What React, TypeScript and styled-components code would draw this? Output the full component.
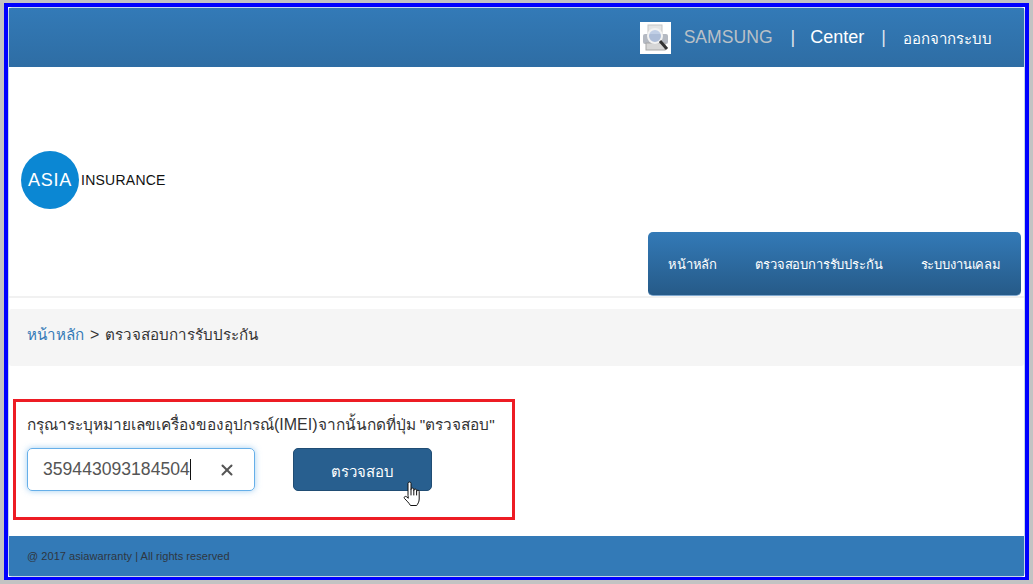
import styled, { createGlobalStyle } from 'styled-components'
import { X } from 'lucide-react'

const GlobalStyle = createGlobalStyle`
  html, body {
    margin: 0;
    padding: 0;
    background: #c3c3c3;
  }
  body {
    font-family: "Liberation Sans", "Noto Sans", sans-serif;
  }
`

const Screen = styled.div`
  width: 1033px;
  height: 584px;
  padding: 3px 4px 4px 4px;
  box-sizing: border-box;
  overflow: hidden;
`

const Frame = styled.div`
  height: 100%;
  box-sizing: border-box;
  border: 4px solid #0000ff;
  border-bottom-width: 3px;
  background: #fff;
`

const Panel = styled.div`
  height: 100%;
  box-sizing: border-box;
  border: 1px solid #c4d6e8;
  border-radius: 4px;
  display: flex;
  flex-direction: column;
`

const TopBar = styled.header`
  height: 59px;
  flex: none;
  display: flex;
  align-items: center;
  justify-content: flex-end;
  padding-right: 32px;
  background: linear-gradient(#337ab7, #2e6da4);
  color: #fff;
  font-size: 18px;
`

const Thumb = styled.div`
  width: 31px;
  height: 32px;
  margin-right: 13px;
  background: #fff;
`

const Brand = styled.span`
  color: #b9c0c7;
  font-size: 17.6px;
  margin-right: 1px;
`

const Sep = styled.span<{ $right: number }>`
  margin: 0 ${p => p.$right}px 0 17px;
  color: #dfe6ee;
`

const Logout = styled.span`
  font-size: 15px;
  position: relative;
  top: 1px;
`

const Masthead = styled.div`
  height: 231px;
  flex: none;
  box-sizing: border-box;
  border-bottom: 2px solid #f1f1f1;
  padding: 84px 3px 0 12px;
  display: flex;
  flex-direction: column;
`

const Logo = styled.div`
  display: flex;
  align-items: center;
  height: 58px;
`

const LogoCircle = styled.div`
  width: 58px;
  height: 58px;
  border-radius: 50%;
  background: #0b87d3;
  color: #fff;
  font-size: 18px;
  letter-spacing: 0.8px;
  display: flex;
  align-items: center;
  justify-content: center;
`

const LogoWord = styled.span`
  margin-left: 2px;
  color: #111;
  font-size: 14px;
  letter-spacing: 0.25px;
`

const Nav = styled.nav`
  align-self: flex-end;
  margin-top: 23px;
  width: 373px;
  height: 64px;
  box-sizing: border-box;
  display: flex;
  align-items: center;
  justify-content: space-between;
  padding: 2px 20px 0;
  border-radius: 5px;
  border-bottom: 1px solid #7fa8cf;
  background: linear-gradient(#337ab7, #265a88);
  color: #fff;
  font-size: 13px;
  letter-spacing: -0.15px;
`

const Crumbs = styled.div`
  height: 57px;
  flex: none;
  margin-top: 11px;
  padding: 0 0 6px 18px;
  box-sizing: border-box;
  display: flex;
  align-items: center;
  gap: 6px;
  background: #f5f5f5;
  border-radius: 3px;
  color: #333;
  font-size: 15.2px;
`

const CrumbLink = styled.a`
  color: #337ab7;
`

const CrumbArrow = styled.span`
  font-size: 16px;
`

const Body = styled.main`
  flex: 1;
  padding: 33px 0 0 4px;
`

const CheckBox = styled.section`
  width: 502px;
  height: 121px;
  box-sizing: border-box;
  border: 3px solid #ed1c24;
  padding: 12px 11px 0;
  color: #333;
`

const Prompt = styled.div`
  font-size: 15.4px;
  line-height: 22px;
  white-space: nowrap;
`

const PromptLatin = styled.span`
  font-size: 16px;
`

const FormRow = styled.div`
  margin-top: 12px;
  display: flex;
  gap: 38px;
`

const Field = styled.div`
  width: 228px;
  height: 43px;
  box-sizing: border-box;
  border: 1px solid #66afe9;
  border-radius: 5px;
  box-shadow: 0 0 6px rgba(102, 175, 233, 0.6);
  padding: 0 18px 0 15px;
  display: flex;
  align-items: center;
  justify-content: space-between;
  color: #555;
  font-size: 17.6px;
`

const Value = styled.span`
  border-right: 1px solid #111;
  line-height: 21px;
`

const CheckButton = styled.button`
  position: relative;
  width: 139px;
  height: 43px;
  border: 1px solid #204d74;
  border-radius: 5px;
  background: #285f8f;
  color: #fff;
  font-family: inherit;
  font-size: 15px;
  padding: 4px 0 0;
`

const HandCursor = styled.svg`
  position: absolute;
  left: 109px;
  top: 32px;
`

const Footer = styled.footer`
  height: 40px;
  flex: none;
  display: flex;
  align-items: center;
  padding-left: 18px;
  background: #337ab7;
  color: #2f3640;
  font-size: 11px;
  letter-spacing: 0.05px;
`

export default function App() {
  return (
    <>
      <GlobalStyle />
      <Screen>
        <Frame>
          <Panel>
            <TopBar>
              <Thumb>
                <svg width="31" height="32" viewBox="0 0 31 32">
                  <rect x="8" y="3" width="14" height="10" fill="#e4e4e4" stroke="#c6c6c6" />
                  <rect x="3" y="12" width="25" height="10" rx="2" fill="#b4b9c2" />
                  <rect x="6" y="21" width="19" height="7" fill="#d6d6d6" stroke="#a8a8a8" />
                  <circle cx="15" cy="14" r="7" fill="#a9c0e6" fillOpacity="0.6" stroke="#f2f2f2" strokeWidth="2" />
                  <path d="M20 19 L27 27" stroke="#333" strokeWidth="3" />
                </svg>
              </Thumb>
              <Brand>SAMSUNG</Brand>
              <Sep $right={15}>|</Sep>
              <span>Center</span>
              <Sep $right={17}>|</Sep>
              <Logout>ออกจากระบบ</Logout>
            </TopBar>
            <Masthead>
              <Logo>
                <LogoCircle>ASIA</LogoCircle>
                <LogoWord>INSURANCE</LogoWord>
              </Logo>
              <Nav>
                <span>หน้าหลัก</span>
                <span>ตรวจสอบการรับประกัน</span>
                <span>ระบบงานเคลม</span>
              </Nav>
            </Masthead>
            <Crumbs>
              <CrumbLink>หน้าหลัก</CrumbLink>
              <CrumbArrow>&gt;</CrumbArrow>
              <span>ตรวจสอบการรับประกัน</span>
            </Crumbs>
            <Body>
              <CheckBox>
                <Prompt>
                  กรุณาระบุหมายเลขเครื่องของอุปกรณ์<PromptLatin>(IMEI)</PromptLatin>จากนั้นกดที่ปุ่ม "ตรวจสอบ"
                </Prompt>
                <FormRow>
                  <Field>
                    <Value>359443093184504</Value>
                    <X size={18} strokeWidth={2.7} color="#555" />
                  </Field>
                  <CheckButton>
                    ตรวจสอบ
                    <HandCursor width="17" height="26" viewBox="0 0 17 26" fill="#fff" stroke="#111" strokeWidth="1" strokeLinecap="round" strokeLinejoin="round">
                      <path d="M5 14V2.5a1.5 1.5 0 0 1 3 0V8.5a1.4 1.4 0 0 1 2.8 0v1a1.4 1.4 0 0 1 2.8 0v1a1.3 1.3 0 0 1 2.6 0V18c0 3-1.5 5-2.5 6.5H7.5C6 22 3.5 19.5 1.5 17.5c-1-1.2.5-2.8 2-1.8L5 17z" />
                      <path d="M8 8.5V14M10.8 9.5V14M13.6 10.5V14" />
                    </HandCursor>
                  </CheckButton>
                </FormRow>
              </CheckBox>
            </Body>
            <Footer>@ 2017 asiawarranty | All rights reserved</Footer>
          </Panel>
        </Frame>
      </Screen>
    </>
  )
}
